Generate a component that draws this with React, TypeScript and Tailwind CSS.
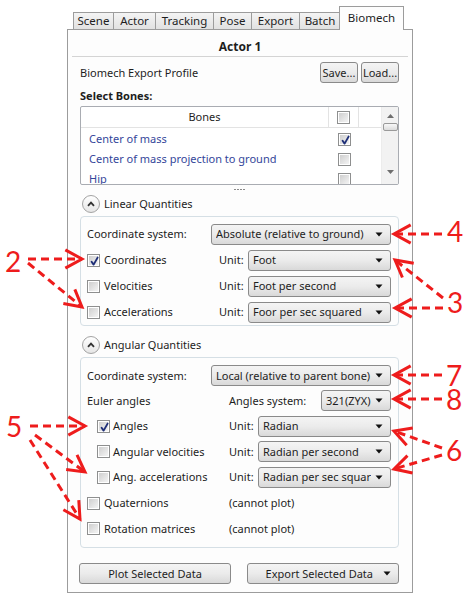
import React from "react";

const tabs = [
  { label: "Scene", w: "w-[41px]" },
  { label: "Actor", w: "w-[43px]" },
  { label: "Tracking", w: "w-[59px]" },
  { label: "Pose", w: "w-[39px]" },
  { label: "Export", w: "w-[49px]" },
  { label: "Batch", w: "w-[42px]" },
];

function Check({ checked = false }: { checked?: boolean }) {
  return (
    <span className="relative inline-flex h-[13px] w-[13px] shrink-0 items-center justify-center border border-[#8e8f8f] bg-white">
      <span className="h-[9px] w-[9px] bg-gradient-to-br from-[#cfcfcf] to-[#f4f4f4]" />
      {checked && (
        <svg className="absolute left-[1px] top-[1px]" width="11" height="11" viewBox="0 0 11 11" fill="none">
          <path d="M2.6 5.8 L4.6 8.6 L8.6 1.6" stroke="#1f2f78" strokeWidth="1.9" strokeLinecap="round" strokeLinejoin="round" />
        </svg>
      )}
    </span>
  );
}

function Caret() {
  return (
    <svg width="8" height="5" viewBox="0 0 8 5" className="shrink-0">
      <path d="M0.5 0.5 H7.5 L4 4.5 Z" fill="#111" />
    </svg>
  );
}

function Combo({ text, w }: { text: string; w: string }) {
  return (
    <div className={`${w} flex h-[21px] shrink-0 items-center gap-[4px] rounded-[3px] border border-[#8a8a8a] bg-gradient-to-b from-[#f4f4f4] via-[#ebebeb] to-[#d9d9d9] pl-[4px] pr-[7px]`}>
      <span className="flex-1 overflow-hidden whitespace-nowrap">{text}</span>
      <Caret />
    </div>
  );
}

function Btn({ children, w }: { children: React.ReactNode; w: string }) {
  return (
    <div className={`${w} flex h-[21px] items-center justify-center rounded-[3px] border border-[#8a8a8a] bg-gradient-to-b from-[#f4f4f4] via-[#ebebeb] to-[#d9d9d9]`}>
      {children}
    </div>
  );
}

function Expander({ label }: { label: string }) {
  return (
    <div className="flex h-[20px] items-center gap-[4px] pl-[2px]">
      <span className="flex h-[18px] w-[18px] items-center justify-center rounded-full border border-[#a3a3a3] bg-gradient-to-b from-white to-[#e6e6e6]">
        <svg width="8" height="6" viewBox="0 0 8 6" fill="none">
          <path d="M1 4.8 L4 1.6 L7 4.8" stroke="#333" strokeWidth="1.8" />
        </svg>
      </span>
      <span>{label}</span>
    </div>
  );
}

function Arrow({ x1, y1, x2, y2 }: { x1: number; y1: number; x2: number; y2: number }) {
  const a = Math.atan2(y2 - y1, x2 - x1);
  const L = 19;
  const h = 0.5;
  const p1 = `${x2 - L * Math.cos(a - h)},${y2 - L * Math.sin(a - h)}`;
  const p2 = `${x2 - L * Math.cos(a + h)},${y2 - L * Math.sin(a + h)}`;
  return (
    <g>
      <line x1={x1} y1={y1} x2={x2} y2={y2} strokeDasharray="8 5" />
      <polyline points={`${p1} ${x2},${y2} ${p2}`} fill="none" />
    </g>
  );
}

const bones = [
  { name: "Center of mass", on: true },
  { name: "Center of mass projection to ground", on: false },
  { name: "Hip", on: false },
];

export default function App() {
  return (
    <div className="relative h-[599px] w-[473px] overflow-hidden bg-white font-['Noto_Sans',sans-serif] text-[11px] leading-[16px] text-[#1e1e1e]">
      <div className="ml-[67px] w-[346px]">
        {/* tab strip */}
        <div className="relative z-10 flex h-[30px] items-end pl-[6px] text-[11.5px]">
          {tabs.map((t) => (
            <div
              key={t.label}
              className={`${t.w} -ml-px mb-px flex h-[17px] items-center justify-center border border-b-0 border-[#9c9c9c] bg-gradient-to-b from-[#f4f4f4] to-[#e1e1e1] first:ml-0`}
            >
              {t.label}
            </div>
          ))}
          <div className="-ml-[2px] flex h-[24px] w-[65px] items-center justify-center border border-b-0 border-[#9c9c9c] bg-[#fdfdfd] pb-[2px]">
            Biomech
          </div>
        </div>

        {/* panel */}
        <div className="-mt-px h-[564px] border border-[#9c9c9c] bg-[#fdfdfd]">
          <div className="pt-[9px] text-center text-[12px] font-bold">Actor 1</div>
          <div className="mx-[4px] mt-px h-px bg-[#d4d4d4]" />

          <div className="pl-[12px] pr-[13px]">
            <div className="mt-[5px] flex h-[21px] items-center justify-between">
              <span>Biomech Export Profile</span>
              <div className="flex gap-[3px]">
                <Btn w="w-[38px]">Save...</Btn>
                <Btn w="w-[38px]">Load...</Btn>
              </div>
            </div>

            <div className="mt-[5px] font-bold">Select Bones:</div>

            {/* bones list */}
            <div className="mt-[2px] flex h-[79px] overflow-hidden rounded-[2px] border border-[#a9acb2] bg-white">
              <div className="w-[300px]">
                <div className="flex h-[21px] border-b border-[#e3e3e3]">
                  <div className="flex w-[248px] items-center justify-center border-r border-[#e3e3e3]">Bones</div>
                  <div className="flex w-[30px] items-center justify-center border-r border-[#e3e3e3]">
                    <Check />
                  </div>
                </div>
                <div className="pt-px">
                  {bones.map((b) => (
                    <div key={b.name} className="flex h-[20px] items-center">
                      <div className="w-[248px] pl-[8px] text-[#34469a]">{b.name}</div>
                      <div className="flex w-[30px] justify-center">
                        <Check checked={b.on} />
                      </div>
                    </div>
                  ))}
                </div>
              </div>
              <div className="flex w-[17px] flex-col items-center border-l border-[#ececec] bg-[#f2f2f2] pt-[7px]">
                <svg width="7" height="4" viewBox="0 0 7 4">
                  <path d="M0 4 L3.5 0 L7 4 Z" fill="#6e6e6e" />
                </svg>
                <div className="mt-[5px] h-[8px] w-[15px] rounded-[2px] border border-[#9a9a9a] bg-gradient-to-b from-[#f8f8f8] to-[#dcdcdc]" />
                <div className="flex-1" />
                <svg width="7" height="4" viewBox="0 0 7 4" className="mb-[10px]">
                  <path d="M0 0 L7 0 L3.5 4 Z" fill="#6e6e6e" />
                </svg>
              </div>
            </div>

            {/* splitter */}
            <div className="flex h-[8px] items-center justify-center gap-[1px]">
              <span className="h-[1px] w-[2px] bg-[#8a8a8a]" />
              <span className="h-[1px] w-[2px] bg-[#8a8a8a]" />
              <span className="h-[1px] w-[2px] bg-[#8a8a8a]" />
              <span className="h-[1px] w-[2px] bg-[#8a8a8a]" />
            </div>

            <div className="mt-px">
              <Expander label="Linear Quantities" />
            </div>

            {/* linear group */}
            <div className="mt-[2px] rounded-[4px] border border-[#d5dfe5] pl-[6px] pr-[6px] pt-[4px]">
              <div className="flex h-[26px] items-center">
                <span className="w-[124px]">Coordinate system:</span>
                <Combo w="w-[180px]" text="Absolute (relative to ground)" />
              </div>
              {[
                { l: "Coordinates", u: "Foot", on: true },
                { l: "Velocities", u: "Foot per second", on: false },
                { l: "Accelerations", u: "Foor per sec squared", on: false },
              ].map((r) => (
                <div key={r.l} className="flex h-[26px] items-center">
                  <span className="flex w-[132px] items-center gap-[4px]">
                    <Check checked={r.on} />
                    {r.l}
                  </span>
                  <span className="w-[29px]">Unit:</span>
                  <Combo w="w-[143px]" text={r.u} />
                </div>
              ))}
            </div>

            <div className="mt-[9px]">
              <Expander label="Angular Quantities" />
            </div>

            {/* angular group */}
            <div className="mt-[2px] rounded-[4px] border border-[#d5dfe5] pb-[6px] pl-[6px] pr-[6px] pt-[5px]">
              <div className="flex h-[25px] items-center">
                <span className="w-[124px]">Coordinate system:</span>
                <Combo w="w-[180px]" text="Local (relative to parent bone)" />
              </div>
              <div className="flex h-[25px] items-center">
                <span className="w-[142px]">Euler angles</span>
                <span className="w-[92px]">Angles system:</span>
                <Combo w="w-[70px]" text="321(ZYX)" />
              </div>
              {[
                { l: "Angles", u: "Radian", on: true, h: "h-[26px]" },
                { l: "Angular velocities", u: "Radian per second", on: false, h: "h-[25px]" },
                { l: "Ang. accelerations", u: "Radian per sec squared", on: false, h: "h-[26px]" },
              ].map((r) => (
                <div key={r.l} className={`flex ${r.h} items-center pl-[10px]`}>
                  <span className="flex w-[132px] items-center gap-[3px]">
                    <Check checked={r.on} />
                    {r.l}
                  </span>
                  <span className="w-[29px]">Unit:</span>
                  <Combo w="w-[133px]" text={r.u} />
                </div>
              ))}
              {["Quaternions", "Rotation matrices"].map((l, i) => (
                <div key={l} className={`flex ${i === 0 ? "h-[26px]" : "h-[25px]"} items-center`}>
                  <span className="flex w-[142px] items-center gap-[4px]">
                    <Check />
                    {l}
                  </span>
                  <span>(cannot plot)</span>
                </div>
              ))}
            </div>

            <div className="-ml-px mt-[15px] flex justify-between">
              <Btn w="w-[152px]">Plot Selected Data</Btn>
              <div className="flex h-[21px] w-[152px] items-center justify-end gap-[10px] rounded-[3px] border border-[#8a8a8a] bg-gradient-to-b from-[#f4f4f4] via-[#ebebeb] to-[#d9d9d9] pr-[7px]">
                <span>Export Selected Data</span>
                <Caret />
              </div>
            </div>
          </div>
        </div>
      </div>

      {/* red call-outs */}
      <svg className="pointer-events-none absolute inset-0" width="473" height="599" viewBox="0 0 473 599">
        <g stroke="#ee1c1c" strokeWidth="3" fill="none">
          <Arrow x1={28} y1={259} x2={82} y2={259} />
          <Arrow x1={28} y1={263} x2={82} y2={307} />
          <Arrow x1={442} y1={234} x2={394} y2={234} />
          <Arrow x1={443} y1={298} x2={395} y2={260} />
          <Arrow x1={443} y1={308} x2={395} y2={308} />
          <Arrow x1={442} y1={375} x2={394} y2={375} />
          <Arrow x1={442} y1={399} x2={394} y2={399} />
          <Arrow x1={442} y1={448} x2={394} y2={431} />
          <Arrow x1={442} y1={455} x2={394} y2={469} />
          <Arrow x1={30} y1={426} x2={85} y2={426} />
          <Arrow x1={35} y1={435} x2={85} y2={472} />
          <Arrow x1={30} y1={440} x2={80} y2={519} />
        </g>
        <g fill="#ee1c1c" fontFamily="Lato, sans-serif" fontSize="28">
          <text x="5" y="272">2</text>
          <text x="447" y="242">4</text>
          <text x="447" y="313">3</text>
          <text x="446" y="386">7</text>
          <text x="446" y="410">8</text>
          <text x="446" y="461">6</text>
          <text x="6" y="437">5</text>
        </g>
      </svg>
    </div>
  );
}
